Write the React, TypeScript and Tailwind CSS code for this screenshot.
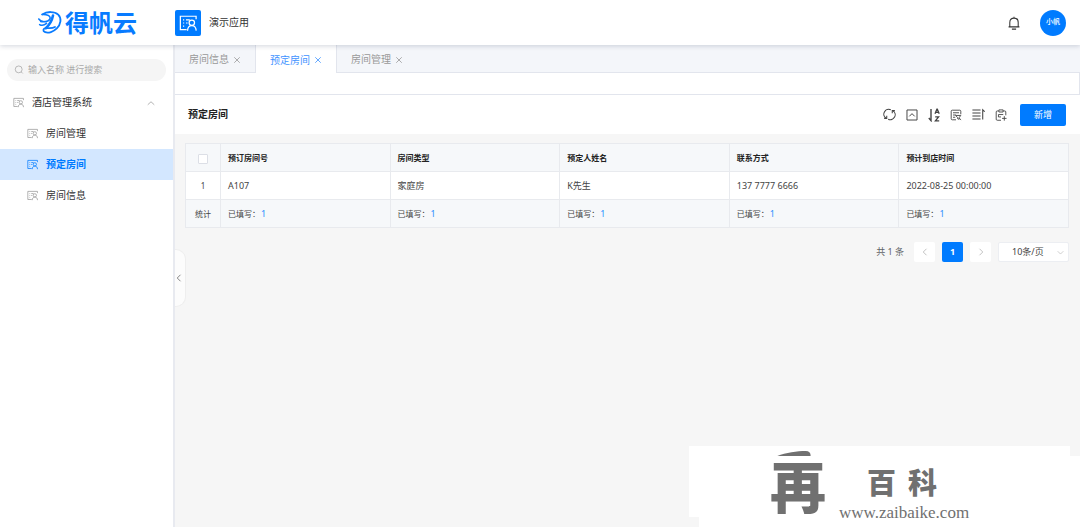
import type { ReactNode } from "react";

interface Column {
  title: string;
  value: string;
}

const columns: Column[] = [
  { title: "预订房间号", value: "A107" },
  { title: "房间类型", value: "家庭房" },
  { title: "预定人姓名", value: "K先生" },
  { title: "联系方式", value: "137 7777 6666" },
  { title: "预计到店时间", value: "2022-08-25 00:00:00" },
];

const tabs = ["房间信息", "预定房间", "房间管理"];
const menus = ["房间管理", "预定房间", "房间信息"];
const current = "预定房间";

function Icon({
  className,
  children,
  width = 1.2,
}: {
  className: string;
  children: ReactNode;
  width?: number;
}) {
  return (
    <svg
      viewBox="0 0 16 16"
      className={className}
      fill="none"
      stroke="currentColor"
      strokeWidth={width}
      aria-hidden="true"
    >
      {children}
    </svg>
  );
}

function FormIcon({ className }: { className: string }) {
  return (
    <Icon className={className} width={1.1}>
      <path d="M15.2 4.6V2H1.2v11.8h5.6" />
      <path d="M3.6 5.2h1M6.2 5.2h3.4M3.6 8h1M6.2 8h1.4M3.6 10.8h1" />
      <circle cx="11.4" cy="7.8" r="2.4" />
      <path d="M7.6 14.8c.1-2.8 1.4-4.5 3.8-4.5s3.7 1.7 3.9 4.5" />
    </Icon>
  );
}

function CloseIcon() {
  return (
    <Icon className="size-2" width={1.6}>
      <path d="m2.5 2.5 11 11M13.5 2.5l-11 11" />
    </Icon>
  );
}

function Logo() {
  return (
    <div className="flex items-center gap-[2px] text-[#087bff]">
      <svg
        viewBox="0 0 26 25"
        className="h-[25px] w-[26px]"
        fill="none"
        stroke="currentColor"
        strokeLinecap="round"
        strokeLinejoin="round"
        aria-hidden="true"
      >
        <path
          d="M5.2 4.4C10 1.2 17.6 1.2 21.2 4.6c3.8 3.7 2.6 9.9-1.4 13.8-3.4 3.4-8.4 5-11.6 3.8-2.8-1.1-2.2-3.6.6-4 3-.4 6 .6 9.2-1.2"
          strokeWidth="1.8"
        />
        <path d="M16 5.6c-1 5-3.3 9.2-7.2 12.6" strokeWidth="2.6" />
        <path d="M5.2 4.4c5.4-.2 7.6.8 8 3.4.2 2.6-3.6 4.6-9.6 3.8M1.8 9c1 1.6 2.6 2.4 4.4 2.6M2.6 14.6c2 1.2 4.8.6 7-1.2" strokeWidth="1.5" />
      </svg>
      <span className="text-[24px] leading-none font-bold">得帆云</span>
    </div>
  );
}

function Header() {
  return (
    <header className="relative z-10 flex h-[45px] items-center bg-white pr-[14px] shadow-[0_1px_5px_rgba(0,21,61,0.18)]">
      <div className="flex w-[175px] shrink-0 justify-center pr-[1px]">
        <Logo />
      </div>
      <div className="flex items-center gap-2">
        <span className="flex size-[26px] items-center justify-center rounded-[2px] bg-[#007bff] text-white">
          <FormIcon className="size-[18px]" />
        </span>
        <span className="text-[10px] text-[#333]">演示应用</span>
      </div>
      <div className="ml-auto flex items-center gap-[19px]">
        <button type="button" aria-label="通知" className="text-[#333]">
          <Icon className="size-[14px]" width={1.2}>
            <path d="M1.8 12.4h12.4M3.2 12.2V7.3C3.2 4.2 5 2.4 8 2.4s4.8 1.8 4.8 4.9v4.9M8 2.4V.8M5.6 15h4.8" />
          </Icon>
        </button>
        <button
          type="button"
          className="size-[26px] rounded-full bg-[#007bff] text-[7px] font-medium text-white"
        >
          小帆
        </button>
      </div>
    </header>
  );
}

function Sidebar() {
  return (
    <aside className="w-[175px] shrink-0 border-r-2 border-[#e8eaf0] bg-white pt-[14px]">
      <label className="mx-[7px] flex h-[22px] items-center gap-[4px] rounded-full bg-[#f5f5f5] px-[7px] text-[#aaa]">
        <Icon className="size-[10px] shrink-0" width={1.3}>
          <circle cx="7.5" cy="7" r="5.5" />
          <path d="m11.5 11 2.5 2.5" />
        </Icon>
        <input
          aria-label="搜索"
          placeholder="输入名称 进行搜索"
          className="w-full bg-transparent text-[9px] outline-none placeholder:text-[#aaa]"
        />
      </label>
      <nav className="mt-[6px] text-[10px] text-[#333]">
        <button
          type="button"
          className="flex h-[31px] w-full items-center gap-2 pr-[18px] pl-[13px]"
        >
          <FormIcon className="size-[11px] text-[#999]" />
          酒店管理系统
          <Icon className="ml-auto size-2 text-[#999]" width={1.5}>
            <path d="m1.5 11.5 6.5-6 6.5 6" />
          </Icon>
        </button>
        {menus.map((menu) => (
          <a
            key={menu}
            href="#"
            className={`flex h-[31px] items-center gap-2 pl-[27px] ${
              menu === current ? "bg-[#d3e7ff] font-bold text-[#007bff]" : ""
            }`}
          >
            <FormIcon
              className={`size-[11px] ${menu === current ? "" : "text-[#999]"}`}
            />
            {menu}
          </a>
        ))}
      </nav>
    </aside>
  );
}

function Tabs() {
  return (
    <div className="flex h-[28px] border-b border-[#e2e5ed] bg-[#f4f6fa] text-[10px]">
      {tabs.map((tab) => (
        <div
          key={tab}
          className={`flex items-center gap-1 px-[14px] pt-[2px] ${
            tab === current
              ? "-mb-px border-x border-[#e2e5ed] bg-white text-[#3f93ff]"
              : "text-[#999]"
          }`}
        >
          <button type="button">{tab}</button>
          <button type="button" aria-label={`关闭${tab}`}>
            <CloseIcon />
          </button>
        </div>
      ))}
    </div>
  );
}

function Toolbar() {
  return (
    <div className="flex h-[39px] items-center bg-white pr-[14px] pl-[13px]">
      <h1 className="text-[10px] font-bold text-[#222]">{current}</h1>
      <div className="ml-auto flex items-center gap-[10px] text-[#444]">
        <button type="button" aria-label="刷新">
          <Icon className="size-[13px]" width={1.3}>
            <path d="M9.6 2.2A6 6 0 0 0 4 12.8M6.4 13.8A6 6 0 0 0 12 3.2" />
            <path d="M1.4 12.8h3.2V9.6M14.6 3.2h-3.2v3.2" />
          </Icon>
        </button>
        <button type="button" aria-label="收起">
          <Icon className="size-[12px]" width={1.3}>
            <path d="M1.3 1.3h13.4v13.4H1.3zM4.4 9.8 8 6.2l3.6 3.6" />
          </Icon>
        </button>
        <button type="button" aria-label="排序">
          <svg
            viewBox="0 0 12 14"
            className="h-[14px] w-[12px]"
            fill="none"
            stroke="currentColor"
            aria-hidden="true"
          >
            <path d="M3 1v11.6L.8 10" strokeWidth="1.4" />
            <path
              d="m7 5.8 1.9-4.6h.4l1.9 4.6M7.6 4.4h3M7.2 8.8h3.4l-3.2 4h3.8"
              strokeWidth="1.3"
            />
          </svg>
        </button>
        <button type="button" aria-label="筛选">
          <Icon className="size-[12px]">
            <path d="M14.4 7V3a1.4 1.4 0 0 0-1.4-1.4H3A1.4 1.4 0 0 0 1.6 3v10A1.4 1.4 0 0 0 3 14.4h5M4 5h8M4 8h4M4 11h3" />
            <path d="M7.6 8.6h6.8l-2.2 2.8v2.4l-2.2-1v-1.4zM12.2 12l2.6 2.6" />
          </Icon>
        </button>
        <button type="button" aria-label="行高">
          <Icon className="size-[13px]" width={1.3}>
            <path d="M.5 2.4h10M.5 6.1h10M.5 9.8h10M.5 13.5h10M13.2 14.2V2.2l2.4 2.4" />
          </Icon>
        </button>
        <button type="button" aria-label="导出">
          <Icon className="size-[12px]">
            <path d="M5 2.6H3A1.4 1.4 0 0 0 1.6 4v9.6A1.4 1.4 0 0 0 3 15h5M11 2.6h2A1.4 1.4 0 0 1 14.4 4v4.4M5.2 1.2h5.6V4H5.2zM4.6 7.4H11M4.6 7.4v3.2H8M12.4 9.5v6M9.4 12.5h6" />
          </Icon>
        </button>
        <button
          type="button"
          className="ml-[3px] h-[22px] w-[46px] rounded-[2px] bg-[#007bff] text-[9px] text-white"
        >
          新增
        </button>
      </div>
    </div>
  );
}

function BookingTable() {
  return (
    <table className="w-full table-fixed border-collapse border border-[#e8eaee] text-left text-[#444]">
      <thead className="bg-[#f6f8fa] text-[8px] text-[#222]">
        <tr className="h-[28px]">
          <th className="w-[35px] border border-[#e8eaee]">
            <input
              type="checkbox"
              aria-label="全选"
              className="mx-auto mt-[3px] block size-[10px] appearance-none rounded-[1px] border border-[#dcdfe6] bg-white"
            />
          </th>
          {columns.map((column) => (
            <th
              key={column.title}
              className="border border-[#e8eaee] px-[7px] font-bold"
            >
              {column.title}
            </th>
          ))}
        </tr>
      </thead>
      <tbody className="bg-white text-[9px]">
        <tr className="h-[28px]">
          <td className="border border-[#e8eaee] text-center text-[8px]">1</td>
          {columns.map((column) => (
            <td key={column.title} className="border border-[#e8eaee] px-[7px]">
              {column.value}
            </td>
          ))}
        </tr>
      </tbody>
      <tfoot className="bg-[#f6f8fa] text-[8px]">
        <tr className="h-[28px]">
          <td className="border border-[#e8eaee] text-center">统计</td>
          {columns.map((column) => (
            <td key={column.title} className="border border-[#e8eaee] px-[7px]">
              已填写：
              <span className="ml-px text-[9px] text-[#2b8fff]">1</span>
            </td>
          ))}
        </tr>
      </tfoot>
    </table>
  );
}

function Pagination() {
  return (
    <div className="mt-[14px] flex h-[20px] items-center justify-end text-[9px] text-[#606266]">
      <span className="mr-[10px]">共 1 条</span>
      <div className="flex gap-[7px]">
        <button
          type="button"
          aria-label="上一页"
          className="flex h-[20px] w-[21px] items-center justify-center rounded-[2px] bg-white text-[#bbb]"
        >
          <Icon className="size-2" width={1.8}>
            <path d="M11 1.5 4.5 8l6.5 6.5" />
          </Icon>
        </button>
        <button
          type="button"
          className="h-[20px] w-[21px] rounded-[2px] bg-[#007bff] font-bold text-white"
        >
          1
        </button>
        <button
          type="button"
          aria-label="下一页"
          className="flex h-[20px] w-[21px] items-center justify-center rounded-[2px] bg-white text-[#bbb]"
        >
          <Icon className="size-2" width={1.8}>
            <path d="M5 1.5 11.5 8 5 14.5" />
          </Icon>
        </button>
      </div>
      <div className="relative ml-[7px] w-[71px]">
        <select
          aria-label="每页条数"
          className="h-[20px] w-full appearance-none rounded-[2px] border border-[#eceef2] bg-white pl-[13px] text-[9px] text-[#444]"
        >
          <option>10条/页</option>
        </select>
        <Icon
          className="pointer-events-none absolute top-[7px] right-[5px] size-[7px] text-[#bbb]"
          width={1.6}
        >
          <path d="m1.5 5 6.5 6.5L14.5 5" />
        </Icon>
      </div>
    </div>
  );
}

function Watermark() {
  return (
    <div className="absolute right-0 bottom-0 h-[81px] w-[391px] text-[#707070]">
      <div className="absolute top-0 left-0 h-[71px] w-[381px] bg-white" />
      <div className="absolute right-0 bottom-0 h-[71px] w-[381px] bg-white" />
      <svg
        viewBox="0 0 40 6"
        className="absolute top-[5px] left-[86px] h-[5px] w-[38px]"
        aria-hidden="true"
      >
        <path d="M0 6C10 2 24 0 34 0c4 0 6 2 6 6z" fill="currentColor" />
      </svg>
      <span className="absolute top-0 left-[81px] text-[56px] leading-[81px] font-black">
        再
      </span>
      <span className="absolute top-[20px] left-[178px] flex gap-[12px] text-[29px] leading-[34px] font-black">
        <span>百</span>
        <span>科</span>
      </span>
      <span className="absolute top-[58px] left-[150px] font-['Liberation_Serif',serif] text-[17px] leading-[18px]">
        www.zaibaike.com
      </span>
    </div>
  );
}

export default function App() {
  return (
    <div className="relative flex min-h-screen flex-col overflow-hidden bg-[#f6f6f6] font-['Noto_Sans','Noto_Sans_CJK_SC',sans-serif]">
      <Header />
      <div className="flex flex-1">
        <Sidebar />
        <main className="relative min-w-0 flex-1">
          <Tabs />
          <div className="h-[22px] border-r border-b border-[#e2e5ed] bg-white" />
          <Toolbar />
          <section className="pt-[9px] pr-[11px] pl-[10px]">
            <BookingTable />
            <Pagination />
          </section>
          <button
            type="button"
            aria-label="收起侧栏"
            className="absolute top-[204px] left-0 flex h-[58px] w-[11px] items-center rounded-r-[10px] border border-l-0 border-[#eee] bg-[#fcfcfc] text-[#777]"
          >
            <Icon className="size-2" width={1.8}>
              <path d="M11 1.5 4.5 8l6.5 6.5" />
            </Icon>
          </button>
        </main>
      </div>
      <Watermark />
    </div>
  );
}
